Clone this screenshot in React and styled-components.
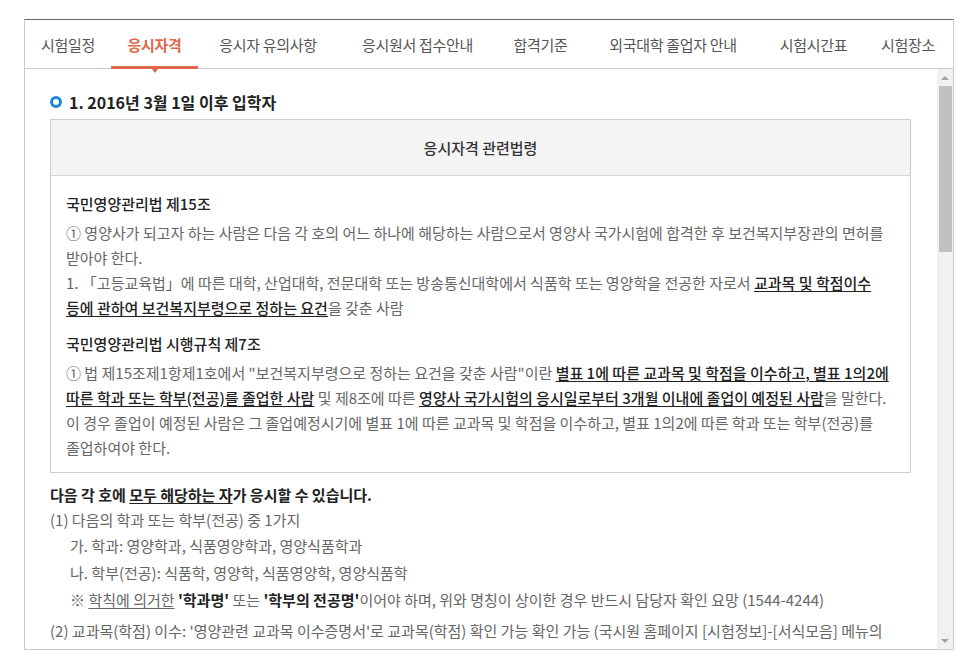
import React from "react";
import styled, { createGlobalStyle } from "styled-components";

const GlobalStyle = createGlobalStyle`
  html, body {
    margin: 0;
    padding: 0;
    background: #fff;
  }
  body {
    font-family: "Noto Sans CJK KR", "Noto Sans", sans-serif;
  }
`;

const Page = styled.div`
  padding: 19px 0 0 24px;
`;

const Panel = styled.div`
  width: 928px;
  border: 1px solid #ccc;
  border-top-color: #666;
  background: #fff;
`;

const TabBar = styled.ul`
  display: flex;
  height: 48px;
  margin: 0;
  padding: 0;
  list-style: none;
  border-bottom: 1px solid #ccc;
`;

const Tab = styled.li`
  position: relative;
  flex: 0 0 ${(p) => p.$w}px;
  display: flex;
  align-items: center;
  justify-content: center;
  font-size: 15px;
  letter-spacing: -0.3px;
  color: ${(p) => (p.$active ? "#e0694c" : "#555")};
  font-weight: ${(p) => (p.$active ? 700 : 400)};
  white-space: nowrap;

  & + &::before {
    content: "";
    position: absolute;
    left: 0;
    top: 18px;
    width: 1px;
    height: 14px;
    background: #ddd;
  }

  ${(p) =>
    p.$active &&
    `
    &::after {
      content: "";
      position: absolute;
      left: 0;
      right: 0;
      bottom: -1px;
      height: 3px;
      background: #e0694c;
    }
  `}
`;

const Pointer = styled.span`
  position: absolute;
  left: 50%;
  bottom: -5px;
  margin-left: -3px;
  border-left: 3px solid transparent;
  border-right: 3px solid transparent;
  border-top: 4px solid #e0694c;
`;

const Body = styled.div`
  display: flex;
  height: 580px;
`;

const Scroller = styled.div`
  flex: 1;
  overflow: hidden;
  padding: 22px 26px 0 25px;
  color: #666;
  font-size: 15px;
`;

const Heading = styled.h3`
  display: flex;
  align-items: center;
  gap: 7px;
  height: 22px;
  margin: 0 0 6px;
  font-size: 16px;
  font-weight: 700;
  color: #222;
`;

const Bullet = styled.span`
  width: 6px;
  height: 6px;
  border: 3px solid #1d87dc;
  border-radius: 50%;
`;

const LawBox = styled.div`
  border: 1px solid #ccc;
`;

const LawHead = styled.div`
  height: 55px;
  display: flex;
  align-items: center;
  justify-content: center;
  background: #f4f4f4;
  border-bottom: 1px solid #d6d6d6;
  color: #333;
  font-weight: 500;
`;

const LawBody = styled.div`
  padding: 15px 15px 12px;
`;

const LawTitle = styled.h4`
  margin: ${(p) => (p.$first ? "0" : "11px")} 0 4px;
  font-size: 15px;
  font-weight: 500;
  line-height: 25px;
  color: #222;
`;

const Para = styled.p`
  margin: 0;
  line-height: 25px;
  word-break: keep-all;
`;

const Em = styled.u`
  color: #222;
  font-weight: 500;
  text-underline-offset: 2px;
`;

const Lead = styled.p`
  margin: 9px 0 0;
  line-height: 25px;
  font-weight: 700;
  color: #222;
`;

const Item = styled.p`
  margin: ${(p) => p.$mt || 0}px 0 0;
  padding-left: ${(p) => (p.$sub ? 20 : 21)}px;
  text-indent: ${(p) => (p.$sub ? 0 : -21)}px;
  line-height: ${(p) => (p.$sub ? 27 : 25)}px;
  word-break: keep-all;
`;

const Plain = styled.u`
  text-underline-offset: 2px;
`;

const Strong = styled.b`
  color: #222;
  font-weight: 700;
`;

const Track = styled.div`
  width: 16px;
  display: flex;
  flex-direction: column;
  background: #f1f1f1;
`;

const Arrow = styled.div`
  height: 17px;
  display: flex;
  align-items: center;
  justify-content: center;
  margin-top: ${(p) => (p.$down ? "auto" : "0")};

  &::before {
    content: "";
    border-left: 4px solid transparent;
    border-right: 4px solid transparent;
    ${(p) =>
      p.$down ? "border-top: 4px solid #a3a3a3;" : "border-bottom: 4px solid #a3a3a3;"}
  }
`;

const Thumb = styled.div`
  height: 166px;
  margin: 0 1px 0 2px;
  background: #c1c1c1;
`;

const tabs = [
  { label: "시험일정", w: 86 },
  { label: "응시자격", w: 87, active: true },
  { label: "응시자 유의사항", w: 140 },
  { label: "응시원서 접수안내", w: 159 },
  { label: "합격기준", w: 87 },
  { label: "외국대학 졸업자 안내", w: 178 },
  { label: "시험시간표", w: 103 },
  { label: "시험장소", w: 86 },
];

export default function App() {
  return (
    <Page>
      <GlobalStyle />
      <Panel>
        <TabBar>
          {tabs.map((t) => (
            <Tab key={t.label} $w={t.w} $active={t.active}>
              {t.label}
              {t.active && <Pointer />}
            </Tab>
          ))}
        </TabBar>

        <Body>
          <Scroller>
            <Heading>
              <Bullet />
              1. 2016년 3월 1일 이후 입학자
            </Heading>

            <LawBox>
              <LawHead>응시자격 관련법령</LawHead>
              <LawBody>
                <LawTitle $first>국민영양관리법 제15조</LawTitle>
                <Para>
                  ① 영양사가 되고자 하는 사람은 다음 각 호의 어느 하나에 해당하는 사람으로서 영양사
                  국가시험에 합격한 후 보건복지부장관의 면허를 받아야 한다.
                </Para>
                <Para>
                  1. 「고등교육법」에 따른 대학, 산업대학, 전문대학 또는 방송통신대학에서 식품학 또는
                  영양학을 전공한 자로서{" "}
                  <Em>교과목 및 학점이수 등에 관하여 보건복지부령으로 정하는 요건</Em>을 갖춘 사람
                </Para>

                <LawTitle>국민영양관리법 시행규칙 제7조</LawTitle>
                <Para>
                  ① 법 제15조제1항제1호에서 "보건복지부령으로 정하는 요건을 갖춘 사람"이란{" "}
                  <Em>
                    별표 1에 따른 교과목 및 학점을 이수하고, 별표 1의2에 따른 학과 또는 학부(전공)를
                    졸업한 사람
                  </Em>{" "}
                  및 제8조에 따른{" "}
                  <Em>영양사 국가시험의 응시일로부터 3개월 이내에 졸업이 예정된 사람</Em>을 말한다.
                  이 경우 졸업이 예정된 사람은 그 졸업예정시기에 별표 1에 따른 교과목 및 학점을
                  이수하고, 별표 1의2에 따른 학과 또는 학부(전공)를 졸업하여야 한다.
                </Para>
              </LawBody>
            </LawBox>

            <Lead>
              다음 각 호에 <Plain>모두 해당하는 자</Plain>가 응시할 수 있습니다.
            </Lead>
            <Item>(1) 다음의 학과 또는 학부(전공) 중 1가지</Item>
            <Item $sub>가. 학과: 영양학과, 식품영양학과, 영양식품학과</Item>
            <Item $sub>나. 학부(전공): 식품학, 영양학, 식품영양학, 영양식품학</Item>
            <Item $sub>
              ※ <Plain>학칙에 의거한</Plain> <Strong>'학과명'</Strong> 또는{" "}
              <Strong>'학부의 전공명'</Strong>이어야 하며, 위와 명칭이 상이한 경우 반드시 담당자
              확인 요망 (1544-4244)
            </Item>
            <Item $mt={5}>
              (2) 교과목(학점) 이수: '영양관련 교과목 이수증명서'로 교과목(학점) 확인 가능 확인 가능
              (국시원 홈페이지 [시험정보]-[서식모음] 메뉴의 "영양관련 교과목 이수증명서, 영양관련
              10과목 52학점 이수대학 목록" 게시글 첨부파일 참조)
            </Item>
          </Scroller>

          <Track>
            <Arrow />
            <Thumb />
            <Arrow $down />
          </Track>
        </Body>
      </Panel>
    </Page>
  );
}
